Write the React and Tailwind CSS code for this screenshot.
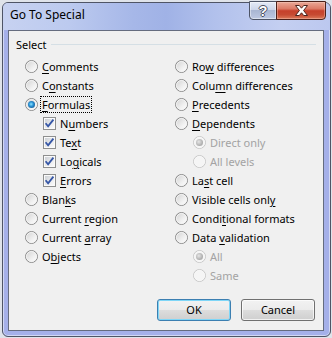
import React from 'react'

const LEFT = [
  { kind: 'radio', label: 'Comments', key: 0 },
  { kind: 'radio', label: 'Constants', key: 1 },
  { kind: 'radio', label: 'Formulas', key: 0, checked: true, focus: true },
  { kind: 'check', label: 'Numbers', key: 1 },
  { kind: 'check', label: 'Text', key: 2 },
  { kind: 'check', label: 'Logicals', key: 2 },
  { kind: 'check', label: 'Errors', key: 0 },
  { kind: 'radio', label: 'Blanks', key: 4 },
  { kind: 'radio', label: 'Current region', key: 8 },
  { kind: 'radio', label: 'Current array', key: 8 },
  { kind: 'radio', label: 'Objects', key: 1 },
]

const RIGHT = [
  { kind: 'radio', label: 'Row differences', key: 2 },
  { kind: 'radio', label: 'Column differences', key: 4 },
  { kind: 'radio', label: 'Precedents', key: 0 },
  { kind: 'radio', label: 'Dependents', key: 0 },
  { kind: 'radio', label: 'Direct only', key: -1, sub: true, disabled: true, checked: true },
  { kind: 'radio', label: 'All levels', key: -1, sub: true, disabled: true },
  { kind: 'radio', label: 'Last cell', key: 2 },
  { kind: 'radio', label: 'Visible cells only', key: 17 },
  { kind: 'radio', label: 'Conditional formats', key: 5 },
  { kind: 'radio', label: 'Data validation', key: 5 },
  { kind: 'radio', label: 'All', key: -1, sub: true, disabled: true, checked: true },
  { kind: 'radio', label: 'Same', key: -1, sub: true, disabled: true },
]

// text with the access key underlined
function AccessLabel({ text, k }) {
  if (k < 0) return text
  return (
    <>
      {text.slice(0, k)}
      <u className="decoration-1 underline-offset-[2px]">{text[k]}</u>
      {text.slice(k + 1)}
    </>
  )
}

function Radio({ checked, disabled }) {
  return (
    <span
      className={`flex h-[13px] w-[13px] shrink-0 items-center justify-center rounded-full border ${
        disabled
          ? 'border-[#c9c9c9] bg-[#f5f5f5]'
          : 'border-[#8c8c8c] bg-[linear-gradient(135deg,#c4c4c4_0%,#e4e4e4_45%,#fbfbfb_100%)]'
      }`}
    >
      <span
        className={`flex h-[11px] w-[11px] items-center justify-center rounded-full border ${
          disabled ? 'border-[#f8f8f8]' : 'border-[#f4f4f4] bg-[linear-gradient(135deg,#d6d6d6_0%,#efefef_60%,#fdfdfd_100%)]'
        }`}
      >
        {checked && (
          <span
            className={`h-[7px] w-[7px] rounded-full ${
              disabled
                ? 'bg-[radial-gradient(circle_at_40%_40%,#e6e6e6_0%,#b2b2b2_60%,#9c9c9c_100%)]'
                : 'bg-[radial-gradient(circle_at_45%_45%,#8fe6ff_0%,#2b93d6_40%,#0c3f70_100%)]'
            }`}
          />
        )}
      </span>
    </span>
  )
}

function Check() {
  return (
    <span className="flex h-[13px] w-[13px] shrink-0 items-center justify-center border border-[#8e8f8f] bg-[#f4f4f4]">
      <span className="flex h-[11px] w-[11px] items-center justify-center border border-[#fafafa] bg-[linear-gradient(135deg,#cdd1d6_0%,#e9eaec_55%,#fbfbfb_100%)]">
        <svg width="11" height="11" viewBox="0 0 11 11" className="shrink-0">
          <polyline points="1.6,5.2 4.1,8.3 9.4,1.6" fill="none" stroke="#3556a6" strokeWidth="1.8" />
        </svg>
      </span>
    </span>
  )
}

function Row({ item }) {
  const indent = item.kind === 'check' || item.sub
  return (
    <div className={`flex h-[19px] items-center ${indent ? 'pl-[18px]' : ''}`}>
      {item.kind === 'check' ? <Check /> : <Radio checked={item.checked} disabled={item.disabled} />}
      {item.focus ? (
        <span className="ml-[2px] border border-dotted border-black px-px leading-[15px]">
          <AccessLabel text={item.label} k={item.key} />
        </span>
      ) : (
        <span className={`ml-[4px] leading-[15px] ${item.disabled ? 'text-[#a3a3a3]' : 'text-black'}`}>
          <AccessLabel text={item.label} k={item.key} />
        </span>
      )}
    </div>
  )
}

function CaptionButtons() {
  return (
    <div className="ml-auto mr-[4px] -mt-[2px] flex">
      <div className="flex h-[19px] w-[28px] items-center justify-center rounded-bl-[4px] border border-[#4d5466] bg-[linear-gradient(180deg,#e4eaf6_0%,#cdd6ea_45%,#a9b6d2_50%,#bdc8e2_100%)] shadow-[inset_0_0_0_1px_rgba(255,255,255,0.45)]">
        <span className="font-['Liberation_Sans',sans-serif] text-[14px] font-bold leading-none text-white [text-shadow:1px_0_#4a4f60,-1px_0_#4a4f60,0_1px_#4a4f60,0_-1px_#4a4f60]">
          ?
        </span>
      </div>
      <div className="-ml-px flex h-[19px] w-[50px] items-center justify-center rounded-br-[4px] border border-[#4b2019] bg-[linear-gradient(180deg,#eaa897_0%,#dc7a66_40%,#c6402b_52%,#c64a32_75%,#db7a5a_100%)] shadow-[inset_0_0_0_1px_rgba(255,220,210,0.35)]">
        <svg width="13" height="11" viewBox="0 0 13 11">
          <path
            d="M0.5 0.5 H4.3 L6.5 3.2 L8.7 0.5 H12.5 L8.6 5.5 L12.5 10.5 H8.7 L6.5 7.8 L4.3 10.5 H0.5 L4.4 5.5 Z"
            fill="#ffffff"
            stroke="#4a231c"
            strokeWidth="1"
            strokeLinejoin="round"
          />
        </svg>
      </div>
    </div>
  )
}

function DialogButton({ children, focused }) {
  return (
    <button
      className={`flex h-[22px] w-[74px] items-center justify-center rounded-[3px] border text-[11px] text-black bg-[linear-gradient(180deg,#f2f2f2_0%,#ebebeb_50%,#dddddd_50%,#cfcfcf_100%)] ${
        focused
          ? 'border-[#3c7fb1] shadow-[inset_0_0_0_1px_#7fd6f7]'
          : 'border-[#707070] shadow-[inset_0_0_0_1px_rgba(255,255,255,0.7)]'
      }`}
    >
      {children}
    </button>
  )
}

export default function App() {
  return (
    <div className="h-[338px] w-[332px] overflow-hidden bg-[#dfe3ea] pl-[2px] pt-[2px] font-['Noto_Sans',sans-serif] text-[11px]">
      <div className="flex h-[335px] w-[329px] flex-col rounded-[6px] border border-[#4f5566] bg-[#a5b0e9] shadow-[inset_0_0_0_1px_rgba(255,255,255,0.5)]">
        {/* title bar */}
        <div className="flex h-[27px] shrink-0 items-start rounded-t-[5px] bg-[linear-gradient(90deg,#c7d2f1_0%,#bccaef_20%,#a6b7e8_40%,#a0b2e6_50%,#b2c1ec_65%,#c4cff1_85%,#bcc8ef_100%)]">
          <span className="pl-[7px] pt-[4px] text-[12px] leading-[16px] text-black">Go To Special</span>
          <CaptionButtons />
        </div>

        {/* client area */}
        <div className="mb-[5px] ml-[5px] mr-[6px] flex flex-1 flex-col border border-[#656c7f] bg-[#f0f0f0]">
          <div className="flex h-[16px] items-center pl-[7px] pr-[7px] mt-[5px]">
            <span className="leading-[15px] text-black">Select</span>
            <span className="ml-[4px] h-px flex-1 bg-[#d5dfe5]" />
          </div>

          <div className="mt-[5px] flex pl-[16px]">
            <div className="w-[150px]">
              {LEFT.map((item) => (
                <Row key={item.label} item={item} />
              ))}
            </div>
            <div className="flex-1">
              {RIGHT.map((item) => (
                <Row key={item.label} item={item} />
              ))}
            </div>
          </div>

          <div className="mt-[14px] flex justify-end gap-[10px] pr-[8px]">
            <DialogButton focused>OK</DialogButton>
            <DialogButton>Cancel</DialogButton>
          </div>
        </div>
      </div>
    </div>
  )
}
